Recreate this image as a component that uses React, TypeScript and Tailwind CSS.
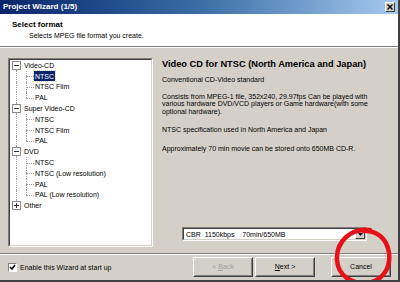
import React from 'react';

type Group = { label: string; open: boolean; items: string[] };

const TREE: Group[] = [
  { label: 'Video-CD', open: true, items: ['NTSC', 'NTSC Film', 'PAL'] },
  { label: 'Super Video-CD', open: true, items: ['NTSC', 'NTSC Film', 'PAL'] },
  { label: 'DVD', open: true, items: ['NTSC', 'NTSC (Low resolution)', 'PAL', 'PAL (Low resolution)'] },
  { label: 'Other', open: false, items: [] },
];

const font = { fontFamily: '"Liberation Sans", Arial, sans-serif' };

const ExpandBox = ({ open }: { open: boolean }) => (
  <div className="relative w-[9px] h-[9px] border border-[#8a8a8a] bg-white">
    <div className="absolute left-[1px] top-[3px] w-[5px] h-px bg-[#333]" />
    {!open && <div className="absolute left-[3px] top-[1px] w-px h-[5px] bg-[#333]" />}
  </div>
);

const TreeView = () => (
  <div className="mt-[10px] ml-[8px] w-[145px] h-[189px] border border-t-[#808080] border-l-[#808080] border-b-white border-r-white">
    <div className="w-full h-full bg-white border border-t-[#404040] border-l-[#404040] border-b-[#d4d0c8] border-r-[#d4d0c8]">
      {TREE.map((g, gi) => {
        const lastGroup = gi === TREE.length - 1;
        return (
          <div key={g.label}>
            <div className="flex items-center h-[10.8px]">
              <div className="w-[13px] h-full relative flex items-center pl-[2px]">
                {gi > 0 && <div className="absolute left-[6px] top-0 h-1/2 border-l border-dotted border-[#a0a0a0]" />}
                {!lastGroup && <div className="absolute left-[6px] bottom-0 h-1/2 border-l border-dotted border-[#a0a0a0]" />}
                <div className="relative z-10">
                  <ExpandBox open={g.open} />
                </div>
              </div>
              <span className="text-[7px] text-black leading-none pl-px">{g.label}</span>
            </div>
            {g.items.map((it, ii) => {
              const lastItem = ii === g.items.length - 1;
              const selected = gi === 0 && ii === 0;
              return (
                <div key={it + ii} className="flex items-center h-[10.8px]">
                  <div className="w-[13px] h-full relative">
                    {!lastGroup && <div className="absolute left-[6px] top-0 h-full border-l border-dotted border-[#a0a0a0]" />}
                  </div>
                  <div className="w-[11px] h-full relative">
                    <div className={`absolute left-[3px] top-0 ${lastItem ? 'h-1/2' : 'h-full'} border-l border-dotted border-[#a0a0a0]`} />
                    <div className="absolute left-[3px] top-1/2 w-[8px] border-t border-dotted border-[#a0a0a0]" />
                  </div>
                  <span
                    className={`text-[7px] leading-none px-px py-[1.5px] ${
                      selected ? 'bg-[#0a246a] text-white outline outline-1 outline-dotted outline-[#d4d0c8]' : 'text-black'
                    }`}
                  >
                    {it}
                  </span>
                </div>
              );
            })}
          </div>
        );
      })}
    </div>
  </div>
);

const Button = ({ label, disabled, accel }: { label: string; disabled?: boolean; accel?: number }) => {
  const chars = label.split('');
  return (
    <div className="w-[60px] h-[20px] border border-t-white border-l-white border-b-[#404040] border-r-[#404040]">
      <div
        className={`w-full h-full flex items-center justify-center border border-t-[#d4d0c8] border-l-[#d4d0c8] border-b-[#808080] border-r-[#808080] text-[7px] ${
          disabled ? 'text-[#a0a0a0]' : 'text-black'
        }`}
      >
        {chars.map((c, i) => (
          <span key={i} className={i === accel ? 'underline' : ''}>
            {c === ' ' ? '\u00a0' : c}
          </span>
        ))}
      </div>
    </div>
  );
};

export default function App() {
  return (
    <div className="relative w-[400px] h-[282px] overflow-hidden bg-[#d4d0c8] flex flex-col border-r-2 border-b-2 border-[#404040]" style={font}>
      {/* title bar */}
      <div className="h-[14px] flex items-center justify-between bg-gradient-to-r from-[#0a246a] via-[#3a6ea5] to-[#a6caf0] pl-[3px] pr-[3px]">
        <span className="text-[8px] font-bold text-white leading-none">Project Wizard (1/5)</span>
        <div className="w-[10px] h-[10px] bg-[#d4d0c8] border border-t-white border-l-white border-b-[#404040] border-r-[#404040] flex items-center justify-center">
          <svg width="6" height="6" viewBox="0 0 6 6">
            <path d="M0.5 0.5 L5.5 5.5 M5.5 0.5 L0.5 5.5" stroke="#000" strokeWidth="1.4" />
          </svg>
        </div>
      </div>

      {/* header */}
      <div className="h-[33px] bg-white border-b border-[#808080] flex flex-col pt-[5px]">
        <span className="pl-[12px] text-[8px] font-bold text-black leading-[11px]">Select format</span>
        <span className="pl-[29px] text-[7px] text-black leading-[10px] mt-px">Selects MPEG file format you create.</span>
      </div>
      <div className="h-px bg-white" />

      {/* main */}
      <div className="flex-1 flex">
        <TreeView />
        <div className="ml-[9px] flex-1 flex flex-col pt-[11px] pr-[8px] text-black">
          <div className="text-[9.25px] font-bold leading-[11px]">Video CD for NTSC (North America and Japan)</div>
          <div className="text-[7px] leading-[8px] mt-[6px]">Conventional CD-Video standard</div>
          <div className="text-[7px] leading-[7.4px] mt-[9px]">
            Consists from MPEG-1 file, 352x240, 29.97fps Can be played with
            <br />
            various hardware DVD/VCD players or Game hardware(with some
            <br />
            optional hardware).
          </div>
          <div className="text-[7px] leading-[8px] mt-[11px]">NTSC specification used in North America and Japan</div>
          <div className="text-[7px] leading-[8px] mt-[11px]">Approximately 70 min movie can be stored onto 650MB CD-R.</div>

          <div className="mt-auto mb-[12px] ml-[20px] w-[185px] h-[14px] border border-t-[#808080] border-l-[#808080] border-b-white border-r-white">
            <div className="w-full h-full bg-white border border-t-[#404040] border-l-[#404040] border-b-[#d4d0c8] border-r-[#d4d0c8] flex items-center">
              <span className="flex-1 pl-[2px] text-[7px] leading-none whitespace-pre">CBR  1150kbps    70min/650MB</span>
              <div className="w-[10px] h-full bg-[#d4d0c8] border border-t-white border-l-white border-b-[#404040] border-r-[#404040] flex items-center justify-center">
                <svg width="5" height="3" viewBox="0 0 5 3">
                  <path d="M0 0 H5 L2.5 3 Z" fill="#000" />
                </svg>
              </div>
            </div>
          </div>
        </div>
      </div>

      {/* separator */}
      <div className="h-px bg-[#808080]" />
      <div className="h-px bg-white" />

      {/* footer */}
      <div className="h-[25px] flex items-center pl-[8px] pr-[7px]">
        <div className="w-[9px] h-[9px] bg-white border border-t-[#808080] border-l-[#808080] border-b-white border-r-white flex items-center justify-center">
          <svg width="7" height="7" viewBox="0 0 7 7">
            <path d="M1 3 L3 5 L6 1" stroke="#000" strokeWidth="1.5" fill="none" />
          </svg>
        </div>
        <span className="ml-[3px] text-[7px] text-black leading-none">Enable this Wizard at start up</span>
        <div className="ml-auto flex items-center -mt-[1px]">
          <Button label="< Back" disabled accel={2} />
          <div className="w-[2px]" />
          <Button label="Next >" accel={0} />
          <div className="w-[16px]" />
          <Button label="Cancel" />
        </div>
      </div>

      {/* hand-drawn red annotation */}
      <svg className="absolute left-[330px] top-[226px] pointer-events-none" width="66" height="60" viewBox="0 0 66 60">
        <path
          d="M40 4 C20 2 6 16 7 34 C8 50 22 58 36 57 C52 56 61 42 59 27 C57 12 46 4 34 5"
          stroke="#e5121a"
          strokeWidth="4.5"
          fill="none"
          strokeLinecap="round"
        />
      </svg>
    </div>
  );
}
